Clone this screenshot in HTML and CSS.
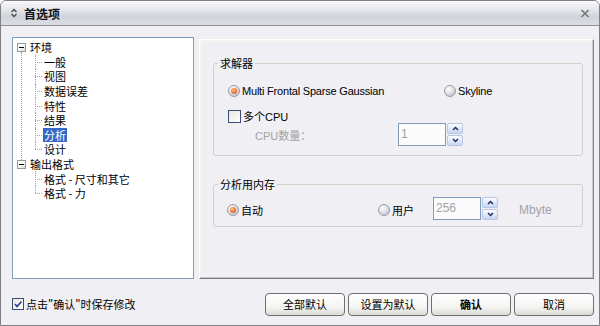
FILE: index.html
```html
<!DOCTYPE html>
<html lang="zh">
<head>
    <meta charset="UTF-8">
    <title>首选项</title>
    <link rel="stylesheet" href="styles.css">
</head>
<body>
    <div class="window">
        <div class="titlebar">
            <svg class="title-icon" width="8" height="10" viewBox="0 0 8 10">
                <path d="M1.5 4 L4 1.5 L6.5 4 M1.5 6 L4 8.5 L6.5 6" fill="none" stroke="#4a4a4a" stroke-width="1.3"/>
            </svg>
            <span class="title-text">首选项</span>
            <svg class="close-icon" width="10" height="9" viewBox="0 0 10 9">
                <path d="M1.5 1 L8.5 8 M8.5 1 L1.5 8" stroke="#777" stroke-width="1.7"/>
            </svg>
        </div>

        <div class="window-body">
            <div class="main-row">
                <div class="tree-box">
                    <ul class="tree">
                        <li class="tree-node">
                            <div class="tree-row"><span class="expander"></span><span class="tree-label">环境</span></div>
                            <ul class="tree-children">
                                <li class="tree-leaf"><span class="tree-label">一般</span></li>
                                <li class="tree-leaf"><span class="tree-label">视图</span></li>
                                <li class="tree-leaf"><span class="tree-label">数据误差</span></li>
                                <li class="tree-leaf"><span class="tree-label">特性</span></li>
                                <li class="tree-leaf"><span class="tree-label">结果</span></li>
                                <li class="tree-leaf"><span class="tree-label selected">分析</span></li>
                                <li class="tree-leaf"><span class="tree-label">设计</span></li>
                            </ul>
                        </li>
                        <li class="tree-node">
                            <div class="tree-row"><span class="expander"></span><span class="tree-label">输出格式</span></div>
                            <ul class="tree-children">
                                <li class="tree-leaf"><span class="tree-label">格式 - 尺寸和其它</span></li>
                                <li class="tree-leaf"><span class="tree-label">格式 - 力</span></li>
                            </ul>
                        </li>
                    </ul>
                </div>

                <div class="panel">
                    <fieldset class="group solver-group">
                        <legend>求解器</legend>
                        <div class="opt-row solver-row">
                            <label class="radio-opt solver-main"><span class="radio checked"></span>Multi Frontal Sparse Gaussian</label>
                            <label class="radio-opt"><span class="radio"></span>Skyline</label>
                        </div>
                        <div class="opt-row cpu-row">
                            <label class="check-opt"><span class="checkbox"></span>多个CPU</label>
                        </div>
                        <div class="opt-row count-row">
                            <span class="muted count-label">CPU数量：</span>
                            <div class="spinner">
                                <span class="spin-field">1</span>
                                <span class="spin-buttons">
                                    <span class="spin-btn"><svg width="7" height="5" viewBox="0 0 7 5"><path d="M1 4 L3.5 1.5 L6 4" fill="none" stroke="#1f2f5e" stroke-width="1.5"/></svg></span>
                                    <span class="spin-btn"><svg width="7" height="5" viewBox="0 0 7 5"><path d="M1 1 L3.5 3.5 L6 1" fill="none" stroke="#1f2f5e" stroke-width="1.5"/></svg></span>
                                </span>
                            </div>
                        </div>
                    </fieldset>

                    <fieldset class="group memory-group">
                        <legend>分析用内存</legend>
                        <div class="opt-row memory-row">
                            <label class="radio-opt memory-auto"><span class="radio checked"></span>自动</label>
                            <label class="radio-opt memory-user"><span class="radio"></span>用户</label>
                            <div class="spinner">
                                <span class="spin-field">256</span>
                                <span class="spin-buttons">
                                    <span class="spin-btn"><svg width="7" height="5" viewBox="0 0 7 5"><path d="M1 4 L3.5 1.5 L6 4" fill="none" stroke="#1f2f5e" stroke-width="1.5"/></svg></span>
                                    <span class="spin-btn"><svg width="7" height="5" viewBox="0 0 7 5"><path d="M1 1 L3.5 3.5 L6 1" fill="none" stroke="#1f2f5e" stroke-width="1.5"/></svg></span>
                                </span>
                            </div>
                            <span class="muted unit">Mbyte</span>
                        </div>
                    </fieldset>
                </div>
            </div>

            <div class="footer">
                <label class="check-opt save-opt">
                    <span class="checkbox">
                        <svg width="10" height="10" viewBox="0 0 10 10"><path d="M2 5 L4 7.5 L8.5 2.5" fill="none" stroke="#2a3c8c" stroke-width="1.6"/></svg>
                    </span>点击&quot;确认&quot;时保存修改
                </label>
                <div class="actions">
                    <button class="btn">全部默认</button>
                    <button class="btn">设置为默认</button>
                    <button class="btn btn-primary">确认</button>
                    <button class="btn">取消</button>
                </div>
            </div>
        </div>
    </div>
</body>
</html>
```

FILE: styles.css
```css
* {
    box-sizing: border-box;
}

body {
    margin: 0;
    font-family: 'Liberation Sans', 'Noto Sans CJK SC', sans-serif;
    font-size: 11px;
    color: #000;
    background-color: #fff;
}

.window {
    width: 600px;
    height: 326px;
    display: flex;
    flex-direction: column;
    border: 1px solid #7e7f84;
    border-radius: 6px 6px 0 0;
    background-color: #efeff4;
    overflow: hidden;
}

/* title bar */
.titlebar {
    height: 25px;
    flex: none;
    display: flex;
    align-items: center;
    padding: 0 9px 0 9px;
    border-bottom: 1px solid #8d8e93;
    background: linear-gradient(to bottom, #f8f8fa 0%, #e9eaee 30%, #d0d3da 65%, #dadde3 100%);
}

.title-icon {
    margin-right: 6px;
}

.title-text {
    font-family: 'Noto Sans CJK SC', sans-serif;
    font-size: 12px;
    font-weight: bold;
    color: #111;
}

.close-icon {
    margin-left: auto;
}

.window-body {
    flex: 1;
    display: flex;
    flex-direction: column;
    padding: 11px 5px 0 11px;
}

.main-row {
    display: flex;
    align-items: flex-start;
    gap: 5px;
}

/* tree */
.tree-box {
    width: 182px;
    height: 242px;
    flex: none;
    background-color: #fff;
    border: 1px solid #7f9db9;
    padding: 2px 0 0 4px;
}

.tree,
.tree-children {
    list-style: none;
    margin: 0;
    padding: 0;
}

.tree-children {
    padding-left: 18px;
}

.tree-node {
    position: relative;
}

.tree-node:not(:last-child)::after {
    content: "";
    position: absolute;
    left: 4px;
    top: 12px;
    bottom: -3px;
    border-left: 1px dotted #a0a0a0;
}

.tree-row,
.tree-leaf {
    height: 14.6px;
    display: flex;
    align-items: center;
}

.tree-leaf {
    position: relative;
    padding-left: 8px;
}

.tree-leaf::before {
    content: "";
    position: absolute;
    left: 0;
    top: 50%;
    width: 7px;
    border-top: 1px dotted #a0a0a0;
}

.tree-leaf::after {
    content: "";
    position: absolute;
    left: 0;
    top: 0;
    bottom: 0;
    border-left: 1px dotted #a0a0a0;
}

.tree-leaf:last-child::after {
    bottom: 50%;
}

.expander {
    position: relative;
    width: 9px;
    height: 9px;
    flex: none;
    margin-right: 3px;
    border: 1px solid #919b9c;
    background: linear-gradient(to bottom right, #fff 40%, #d8d8cc);
}

.expander::after {
    content: "";
    position: absolute;
    left: 1px;
    top: 3px;
    width: 5px;
    height: 1px;
    background-color: #000;
}

.tree-label {
    font-family: 'Noto Sans CJK SC', sans-serif;
    line-height: 14px;
    padding: 0 1px;
    white-space: nowrap;
}

.tree-label.selected {
    background-color: #316ac5;
    color: #fff;
}

/* right panel */
.panel {
    flex: 1;
    height: 240px;
    margin-top: 2px;
    padding: 17px 10px 0 13px;
    border: 1px solid;
    border-color: #fffff6 #86868a #76767a #fffff6;
    box-shadow: inset -1px -1px 0 #c9c9cc, inset 1px 1px 0 #f8f6ea;
}

.group {
    margin: 0;
    padding: 14px 0 9px 0;
    border: 1px solid #d0d0c8;
    border-radius: 3px;
}

.group legend {
    margin-left: 4px;
    padding: 0 2px;
    line-height: 13px;
    font-family: 'Noto Sans CJK SC', sans-serif;
}

.memory-group {
    margin-top: 22px;
    padding: 6px 0 6px 0;
}

.opt-row {
    display: flex;
    align-items: center;
    height: 14px;
}

.solver-row {
    padding-left: 14px;
    letter-spacing: -0.2px;
}

.solver-main {
    width: 216px;
}

.cpu-row {
    margin-top: 11px;
    padding-left: 14px;
}

.count-row {
    height: 23px;
    padding-left: 41px;
}

.count-label {
    width: 143px;
}

.memory-row {
    height: 23px;
    padding-left: 13px;
}

.memory-auto {
    width: 151px;
    margin-top: 3px;
}

.memory-user {
    width: 55px;
    margin-top: 3px;
}

.unit {
    margin-left: 21px;
    margin-top: 3px;
    font-size: 12px;
}

.radio-opt,
.check-opt {
    display: flex;
    align-items: center;
    white-space: nowrap;
}

.radio {
    position: relative;
    width: 12px;
    height: 12px;
    flex: none;
    margin-right: 2px;
    border-radius: 50%;
    border: 1px solid #9a9da6;
    background: radial-gradient(circle at 35% 30%, #ffffff 0%, #d9dbe0 55%, #a9adb6 100%);
}

.radio.checked::after {
    content: "";
    position: absolute;
    left: 2px;
    top: 2px;
    width: 6px;
    height: 6px;
    border-radius: 50%;
    background: radial-gradient(circle at 40% 35%, #ffc28f 0%, #f06b2a 60%, #c8461a 100%);
}

.checkbox {
    width: 13px;
    height: 13px;
    flex: none;
    margin-right: 2px;
    display: flex;
    align-items: center;
    justify-content: center;
    border: 1px solid #3c4a78;
    background: linear-gradient(to bottom right, #e6e6e0, #fff);
}

.muted {
    color: #a3a3a8;
}

/* spinner */
.spinner {
    display: flex;
    align-items: stretch;
    height: 23px;
}

.spin-field {
    width: 48px;
    padding: 3px 2px;
    border: 1px solid #7f9db9;
    background-color: #fbfbfb;
    color: #a3a3a8;
    font-size: 12px;
    line-height: 14px;
}

.spin-buttons {
    display: flex;
    flex-direction: column;
    gap: 1px;
    margin-left: 1px;
}

.spin-btn {
    flex: 1;
    width: 16px;
    display: flex;
    align-items: center;
    justify-content: center;
    border: 1px solid #b7c6e6;
    border-radius: 2px;
    background: linear-gradient(to bottom, #fbfcff, #c9d6f2);
}

/* footer */
.footer {
    flex: 1;
    display: flex;
    align-items: center;
    padding-top: 4px;
}

.save-opt {
    font-family: 'Noto Sans CJK SC', sans-serif;
}

.save-opt .checkbox {
    width: 12px;
    height: 12px;
}

.actions {
    margin-left: auto;
    display: flex;
    gap: 3px;
}

.btn {
    width: 80px;
    height: 23px;
    padding: 0;
    border: 1px solid #707070;
    border-radius: 4px;
    background: linear-gradient(to bottom, #ffffff 0%, #f4f4f2 60%, #dcdcd6 100%);
    font-family: 'Noto Sans CJK SC', sans-serif;
    font-size: 11px;
    color: #000;
}

.btn-primary {
    font-weight: bold;
}
```
